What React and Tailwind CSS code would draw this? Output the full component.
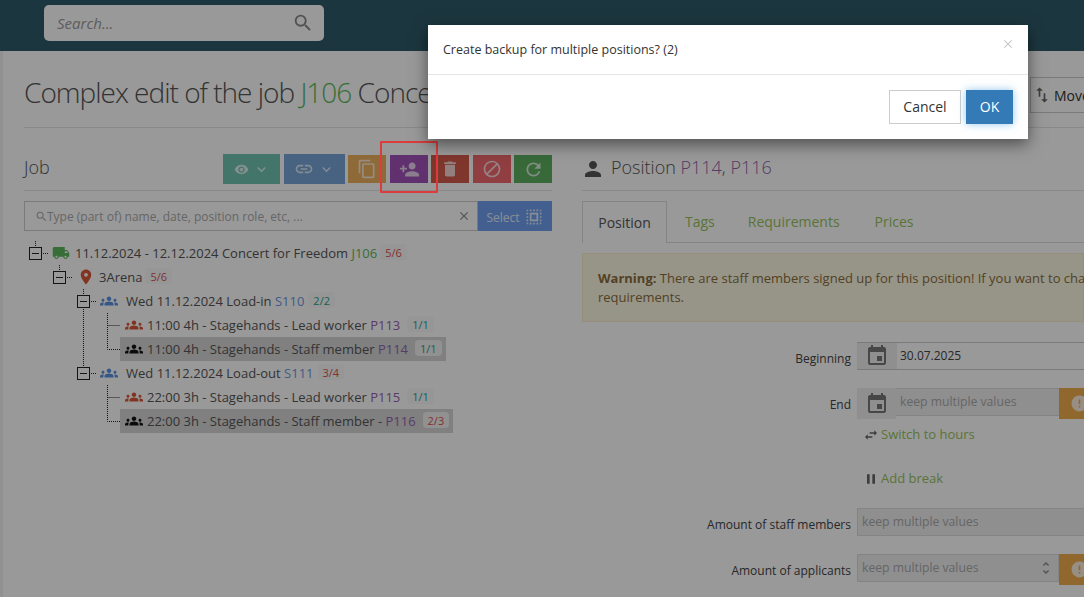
import React from "react";
import {
  MdSearch, MdVisibility, MdKeyboardArrowDown, MdLink, MdOutlineContentCopy, MdPersonAdd, MdDelete, MdBlock, MdRefresh,
  MdClose, MdSelectAll, MdLocalShipping, MdPlace, MdGroups, MdPerson, MdEvent, MdSwapHoriz, MdPause, MdError, MdUnfoldMore, MdSwapVert,
} from "react-icons/md";

const Btn = ({ cls, children }) => (
  <div className={`flex items-center justify-center text-white/75 ${cls}`}>{children}</div>
);

const Box = () => (
  <div className="flex h-[13px] w-[13px] shrink-0 items-center justify-center border border-[#222] bg-white">
    <div className="h-px w-[7px] bg-[#222]" />
  </div>
);

const Badge = ({ cls = "", sel, children }) => (
  <span className={`rounded-[4px] px-[5px] pt-px text-[11px] leading-[19px] ${sel ? "bg-[#f2f2f2]" : "bg-[#fafafa]"} ${cls}`}>{children}</span>
);

const Row = ({ sel, children }) => (
  <div className="flex h-6 items-center pl-[96px]">
    <div className={`flex h-6 items-center pl-[5px] pr-[4px] ${sel ? "bg-[#d6d6d6]" : ""}`}>{children}</div>
  </div>
);

const P = ({ children }) => <span className="text-[#9264ae]">{children}</span>;
const S = ({ children }) => <span className="text-[#6a98e0]">{children}</span>;

const Tree = () => (
  <div className="relative mt-[10px] text-[13px] text-[#555]">
    <svg className="absolute left-0 top-0" width="130" height="200" fill="none" stroke="#222" strokeDasharray="1 1">
      <path d="M11.5 0V5M19 12.5H24M35.5 24V29M43 36.5H48M59.5 48V53M67 60.5H72M59.5 68V125M67 132.5H72M83.5 72V108.5H96M83.5 84.5H96M83.5 144V180.5H96M83.5 156.5H96" />
    </svg>
    <div className="flex h-6 items-center pl-[5px]">
      <Box />
      <MdLocalShipping className="ml-[10px] h-[18px] w-[18px] text-[#5cb85c]" />
      <span className="ml-[5px] pt-[2px]">11.12.2024 - 12.12.2024 Concert for Freedom <span className="text-[#5cb85c]">J106</span></span>
      <span className="ml-[3px]"><Badge cls="text-[#d9534f]">5/6</Badge></span>
    </div>
    <div className="flex h-6 items-center pl-[29px]">
      <Box />
      <MdPlace className="ml-[11px] h-[18px] w-[18px] text-[#d9583b]" />
      <span className="ml-[4px] pt-[2px]">3Arena</span>
      <span className="ml-[3px]"><Badge cls="text-[#d9534f]">5/6</Badge></span>
    </div>
    <div className="flex h-6 items-center pl-[53px]">
      <Box />
      <MdGroups className="ml-[10px] h-[18px] w-[18px] text-[#5b8fe0]" />
      <span className="ml-[8px] pt-[2px]">Wed 11.12.2024 Load-in <S>S110</S></span>
      <span className="ml-[4px]"><Badge cls="text-[#1fa08f]">2/2</Badge></span>
    </div>
    <Row>
      <MdGroups className="h-[18px] w-[18px] text-[#d9583b]" />
      <span className="ml-[4px] pt-[2px]">11:00 4h - Stagehands - Lead worker <P>P113</P></span>
      <span className="ml-[7px]"><Badge cls="text-[#1fa08f]">1/1</Badge></span>
    </Row>
    <Row sel>
      <MdGroups className="h-[18px] w-[18px] text-[#111]" />
      <span className="ml-[4px] pt-[2px]">11:00 4h - Stagehands - Staff member <P>P114</P></span>
      <span className="ml-[7px]"><Badge sel cls="text-[#1fa08f]">1/1</Badge></span>
    </Row>
    <div className="flex h-6 items-center pl-[53px]">
      <Box />
      <MdGroups className="ml-[10px] h-[18px] w-[18px] text-[#5b8fe0]" />
      <span className="ml-[8px] pt-[2px]">Wed 11.12.2024 Load-out <S>S111</S></span>
      <span className="ml-[4px]"><Badge cls="text-[#d9534f]">3/4</Badge></span>
    </div>
    <Row>
      <MdGroups className="h-[18px] w-[18px] text-[#d9583b]" />
      <span className="ml-[4px] pt-[2px]">22:00 3h - Stagehands - Lead worker <P>P115</P></span>
      <span className="ml-[7px]"><Badge cls="text-[#1fa08f]">1/1</Badge></span>
    </Row>
    <Row sel>
      <MdGroups className="h-[18px] w-[18px] text-[#111]" />
      <span className="ml-[4px] pt-[2px]">22:00 3h - Stagehands - Staff member - <P>P116</P></span>
      <span className="ml-[7px]"><Badge sel cls="text-[#d9534f]">2/3</Badge></span>
    </Row>
  </div>
);

const Field = ({ label, mt, children }) => (
  <div className={`flex ${mt}`}>
    <div className="w-[275px] shrink-0 pt-[8px] pr-[6px] text-right text-[12px] leading-[18px] text-[#444]">{label}</div>
    <div className="relative min-w-0 flex-1">{children}</div>
  </div>
);

const Warn = () => (
  <div className="flex h-[31px] w-[30px] shrink-0 items-center justify-start bg-[#f0ad4e] pl-[11px] text-white/80">
    <MdError className="h-[19px] w-[19px] shrink-0" />
  </div>
);

export default function App() {
  return (
    <div className="relative h-[597px] w-[1084px] overflow-hidden bg-white font-['Open_Sans',sans-serif]">
      <header className="flex h-[51px] items-start bg-[#305a6a] pl-[44px] pt-[5px]">
        <div className="flex h-9 w-[280px] items-center justify-between rounded-[5px] bg-white pl-[13px] pr-[10px]">
          <span className="text-[15px] italic text-[#999]">Search...</span>
          <MdSearch className="h-[22px] w-[22px] text-[#888]" />
        </div>
      </header>

      <main className="h-[546px] border-l-[3px] border-[#f2f2f2] pl-[21px]">
        <div className="flex h-[77px] items-start justify-between border-b border-[#e5e5e5]">
          <h1 className="mt-[21px] whitespace-nowrap text-[28px] leading-[40px] font-light tracking-[-1px] text-[#555]">
            Complex edit of the job <span className="text-[#5cb85c]">J106</span> Concert for Freedom
          </h1>
          <div className="mt-[26px] flex h-9 w-[54px] items-center border border-r-0 border-[#ccc] pl-[1px] text-[14px] text-[#333]">
            <MdSwapVert className="mr-[2px] h-[20px] w-[20px] shrink-0 text-[#666]" />Move
          </div>
        </div>

        <div className="flex">
          <section className="w-[528px] shrink-0">
            <div className="flex h-[63px] items-start justify-between border-b border-[#e5e5e5] pt-[26px]">
              <h2 className="text-[18px] leading-[26px] font-light text-[#555]">Job</h2>
              <div className="flex items-center">
                <Btn cls="h-[30px] w-[57px] gap-[4px] bg-[#70c4b2]"><MdVisibility className="h-[15px] w-[15px]" /><MdKeyboardArrowDown className="h-[17px] w-[17px]" /></Btn>
                <Btn cls="ml-[4px] h-[30px] w-[61px] gap-[4px] bg-[#79a6d8]"><MdLink className="h-[20px] w-[20px]" /><MdKeyboardArrowDown className="h-[17px] w-[17px]" /></Btn>
                <Btn cls="ml-[3px] h-[28px] w-[38px] bg-[#edb15e]"><MdOutlineContentCopy className="h-[20px] w-[20px]" /></Btn>
                <Btn cls="ml-[4px] h-[28px] w-[38px] bg-[#a052b8]"><MdPersonAdd className="h-[21px] w-[21px]" /></Btn>
                <Btn cls="ml-[3px] h-[28px] w-[38px] bg-[#d45b4c]"><MdDelete className="h-[20px] w-[20px]" /></Btn>
                <Btn cls="ml-[4px] h-[28px] w-[38px] bg-[#f0686f]"><MdBlock className="h-[20px] w-[20px]" /></Btn>
                <Btn cls="ml-[3px] h-[28px] w-[38px] bg-[#5cb060]"><MdRefresh className="h-[21px] w-[21px]" /></Btn>
              </div>
            </div>
            <div className="mt-[10px] flex h-[30px]">
              <div className="flex flex-1 items-center border border-[#ccc] pl-[10px] pr-[6px] text-[12px] text-[#aaa]">
                <MdSearch className="h-[13px] w-[13px] shrink-0" />
                <span className="-ml-px flex-1 pt-[1px]">Type (part of) name, date, position role, etc, ...</span>
                <MdClose className="h-[14px] w-[14px] text-[#888]" />
              </div>
              <div className="flex w-[74px] items-center justify-center gap-[4px] bg-[#6f9ff0] pt-[3px] text-[12px] text-white/80">
                Select <MdSelectAll className="-mt-[2px] h-[20px] w-[20px]" />
              </div>
            </div>
            <Tree />
          </section>

          <section className="ml-[30px] min-w-0 flex-1">
            <div className="flex h-[63px] items-end border-b border-[#e5e5e5] pb-[9px]">
              <MdPerson className="-ml-px h-[24px] w-[24px] text-[#555]" />
              <h2 className="ml-[6px] text-[18px] font-light text-[#555]">
                Position <P>P114</P>, <P>P116</P>
              </h2>
            </div>
            <div className="mt-[10px] flex h-[42px] border-b border-[#ddd] text-[14px]">
              <div className="-mb-px flex h-[42px] w-[85px] items-center justify-center border border-b-0 border-[#ddd] bg-white text-[#555]">Position</div>
              <div className="ml-[18px] flex items-center text-[#96c25e]">Tags</div>
              <div className="ml-[33px] flex items-center text-[#96c25e]">Requirements</div>
              <div className="ml-[35px] flex items-center text-[#96c25e]">Prices</div>
            </div>
            <div className="mt-[10px] h-[69px] border border-[#faebcc] bg-[#fcf8e3] px-[15px] pt-[15px] text-[13px] leading-[19px] text-[#8a6d3b]">
              <div className="whitespace-nowrap"><b>Warning:</b> There are staff members signed up for this position! If you want to change the requirements, you can do so</div>
              <div>requirements.</div>
            </div>

            <Field label="Beginning" mt="mt-[20px]">
              <div className="-mr-[10px] flex h-[28px] border border-l-0 border-[#ccc]">
                <div className="flex w-[40px] shrink-0 items-center justify-center bg-[#eee]"><MdEvent className="h-[24px] w-[24px] text-[#777]" /></div>
                <div className="pl-[3px] pt-[3px] text-[12px] leading-[20px] text-[#444]">30.07.2025</div>
              </div>
            </Field>
            <Field label="End" mt="mt-[18px]">
              <div className="flex">
                <div className="flex h-[31px] w-[39px] shrink-0 items-center justify-center bg-[#eee]"><MdEvent className="h-[24px] w-[24px] text-[#777]" /></div>
                <div className="h-[28px] w-[163px] shrink-0 border-y border-[#ddd] bg-[#eee] pl-[4px] pt-[3px] text-[12.2px] leading-[20px] text-[#aaa]">keep multiple values</div>
                <Warn />
              </div>
              <div className="mt-[6px] flex h-[20px] items-center pl-[6px] text-[13px] text-[#96c25e]">
                <MdSwapHoriz className="h-[16px] w-[16px] text-[#666]" /><span className="ml-[2px]">Switch to hours</span>
              </div>
              <div className="mt-[24px] flex h-[20px] items-center pl-[6px] text-[13px] text-[#96c25e]">
                <MdPause className="h-[16px] w-[16px] text-[#666]" /><span className="ml-[2px]">Add break</span>
              </div>
            </Field>
            <Field label="Amount of staff members" mt="mt-[19px]">
              <div className="-mr-[10px] h-[28px] border border-r-0 border-[#ddd] bg-[#eee] pl-[4px] pt-[3px] text-[12.2px] leading-[20px] text-[#aaa]">keep multiple values</div>
            </Field>
            <Field label="Amount of applicants" mt="mt-[18px]">
              <div className="flex">
                <div className="flex h-[28px] w-[202px] shrink-0 items-center justify-between border border-[#ddd] bg-[#eee] pl-[4px] pr-[4px] text-[12.2px] text-[#aaa]">
                  keep multiple values <MdUnfoldMore className="h-[16px] w-[16px] text-[#888]" />
                </div>
                <Warn />
              </div>
            </Field>
          </section>
        </div>
      </main>

      <div className="absolute inset-0 bg-black/40" />
      <div className="absolute left-[380px] top-[141px] h-[52px] w-[58px] rounded-[1px] border-2 border-[#dc3c3c]" />

      <div className="absolute left-[428px] top-[25px] w-[600px] bg-white shadow-[0_5px_15px_rgba(0,0,0,0.5)]">
        <div className="relative flex h-[50px] items-center border-b border-[#e5e5e5] pl-[15px] pt-[1px] text-[12.5px] text-[#333]">
          Create backup for multiple positions? (2)
          <MdClose className="absolute right-[13px] top-[12px] h-[14px] w-[14px] text-[#c8c8c8]" />
        </div>
        <div className="flex h-[64px] items-start justify-end gap-[5px] pr-[15px] pt-[15px]">
          <div className="flex h-[34px] w-[72px] items-center justify-center border border-[#ccc] pb-[1px] text-[14px] text-[#333]">Cancel</div>
          <div className="flex h-[34px] w-[47px] items-center justify-center bg-[#337ab7] pb-[1px] text-[14px] text-white shadow-[0_0_8px_rgba(102,175,233,0.7)]">OK</div>
        </div>
      </div>
    </div>
  );
}
